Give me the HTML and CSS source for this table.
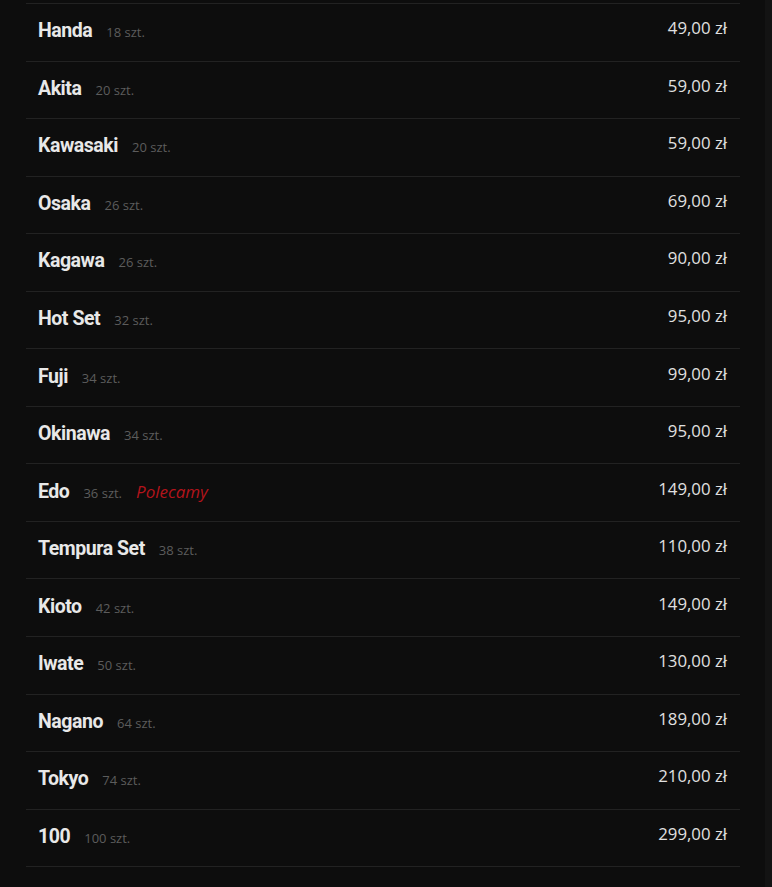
FILE: index.html
```html
<!DOCTYPE html>
<html lang="pl">
<head>
<meta charset="utf-8">
<link rel="stylesheet" href="styles.css">
</head>
<body>
<div class="page">
  <main class="menu">
    <ul class="list">
      <li class="row"><div class="info"><span class="name">Handa</span><span class="qty">18 szt.</span></div><span class="price">49,00 zł</span></li>
      <li class="row"><div class="info"><span class="name">Akita</span><span class="qty">20 szt.</span></div><span class="price">59,00 zł</span></li>
      <li class="row"><div class="info"><span class="name">Kawasaki</span><span class="qty">20 szt.</span></div><span class="price">59,00 zł</span></li>
      <li class="row"><div class="info"><span class="name">Osaka</span><span class="qty">26 szt.</span></div><span class="price">69,00 zł</span></li>
      <li class="row"><div class="info"><span class="name">Kagawa</span><span class="qty">26 szt.</span></div><span class="price">90,00 zł</span></li>
      <li class="row"><div class="info"><span class="name">Hot Set</span><span class="qty">32 szt.</span></div><span class="price">95,00 zł</span></li>
      <li class="row"><div class="info"><span class="name">Fuji</span><span class="qty">34 szt.</span></div><span class="price">99,00 zł</span></li>
      <li class="row"><div class="info"><span class="name">Okinawa</span><span class="qty">34 szt.</span></div><span class="price">95,00 zł</span></li>
      <li class="row"><div class="info"><span class="name">Edo</span><span class="qty">36 szt.</span><span class="tag">Polecamy</span></div><span class="price">149,00 zł</span></li>
      <li class="row"><div class="info"><span class="name">Tempura Set</span><span class="qty">38 szt.</span></div><span class="price">110,00 zł</span></li>
      <li class="row"><div class="info"><span class="name">Kioto</span><span class="qty">42 szt.</span></div><span class="price">149,00 zł</span></li>
      <li class="row"><div class="info"><span class="name">Iwate</span><span class="qty">50 szt.</span></div><span class="price">130,00 zł</span></li>
      <li class="row"><div class="info"><span class="name">Nagano</span><span class="qty">64 szt.</span></div><span class="price">189,00 zł</span></li>
      <li class="row"><div class="info"><span class="name">Tokyo</span><span class="qty">74 szt.</span></div><span class="price">210,00 zł</span></li>
      <li class="row"><div class="info"><span class="name">100</span><span class="qty">100 szt.</span></div><span class="price">299,00 zł</span></li>
    </ul>
  </main>
  <div class="edge"></div>
</div>
</body>
</html>
```
FILE: styles.css
```css
html, body {
  margin: 0;
  padding: 0;
  background: #0d0d0d;
}
.page {
  display: flex;
  min-height: 887px;
}
.menu {
  flex: 1;
  padding: 3px 25px 0 26px;
}
.edge {
  width: 7px;
  background: #131313;
}
.list {
  list-style: none;
  margin: 0;
  padding: 0;
  border-top: 1px solid #222;
}
.row {
  display: flex;
  justify-content: space-between;
  align-items: center;
  height: 56.55px;
  border-bottom: 1px solid #222;
  padding: 0 13px 0 12px;
}
.info {
  display: flex;
  align-items: baseline;
  gap: 14px;
  margin-bottom: 3px;
}
.name {
  font-family: "Roboto", sans-serif;
  font-weight: 700;
  font-size: 19.5px;
  letter-spacing: -0.45px;
  color: #e8e8e8;
}
.qty {
  font-family: "Open Sans", sans-serif;
  font-size: 13px;
  color: #5c5c5c;
}
.tag {
  font-family: "Open Sans", sans-serif;
  font-style: italic;
  font-size: 17px;
  color: #b3141b;
}
.price {
  font-family: "Open Sans", sans-serif;
  font-size: 16.8px;
  color: #e0e0e0;
  margin-bottom: 9px;
}
```
